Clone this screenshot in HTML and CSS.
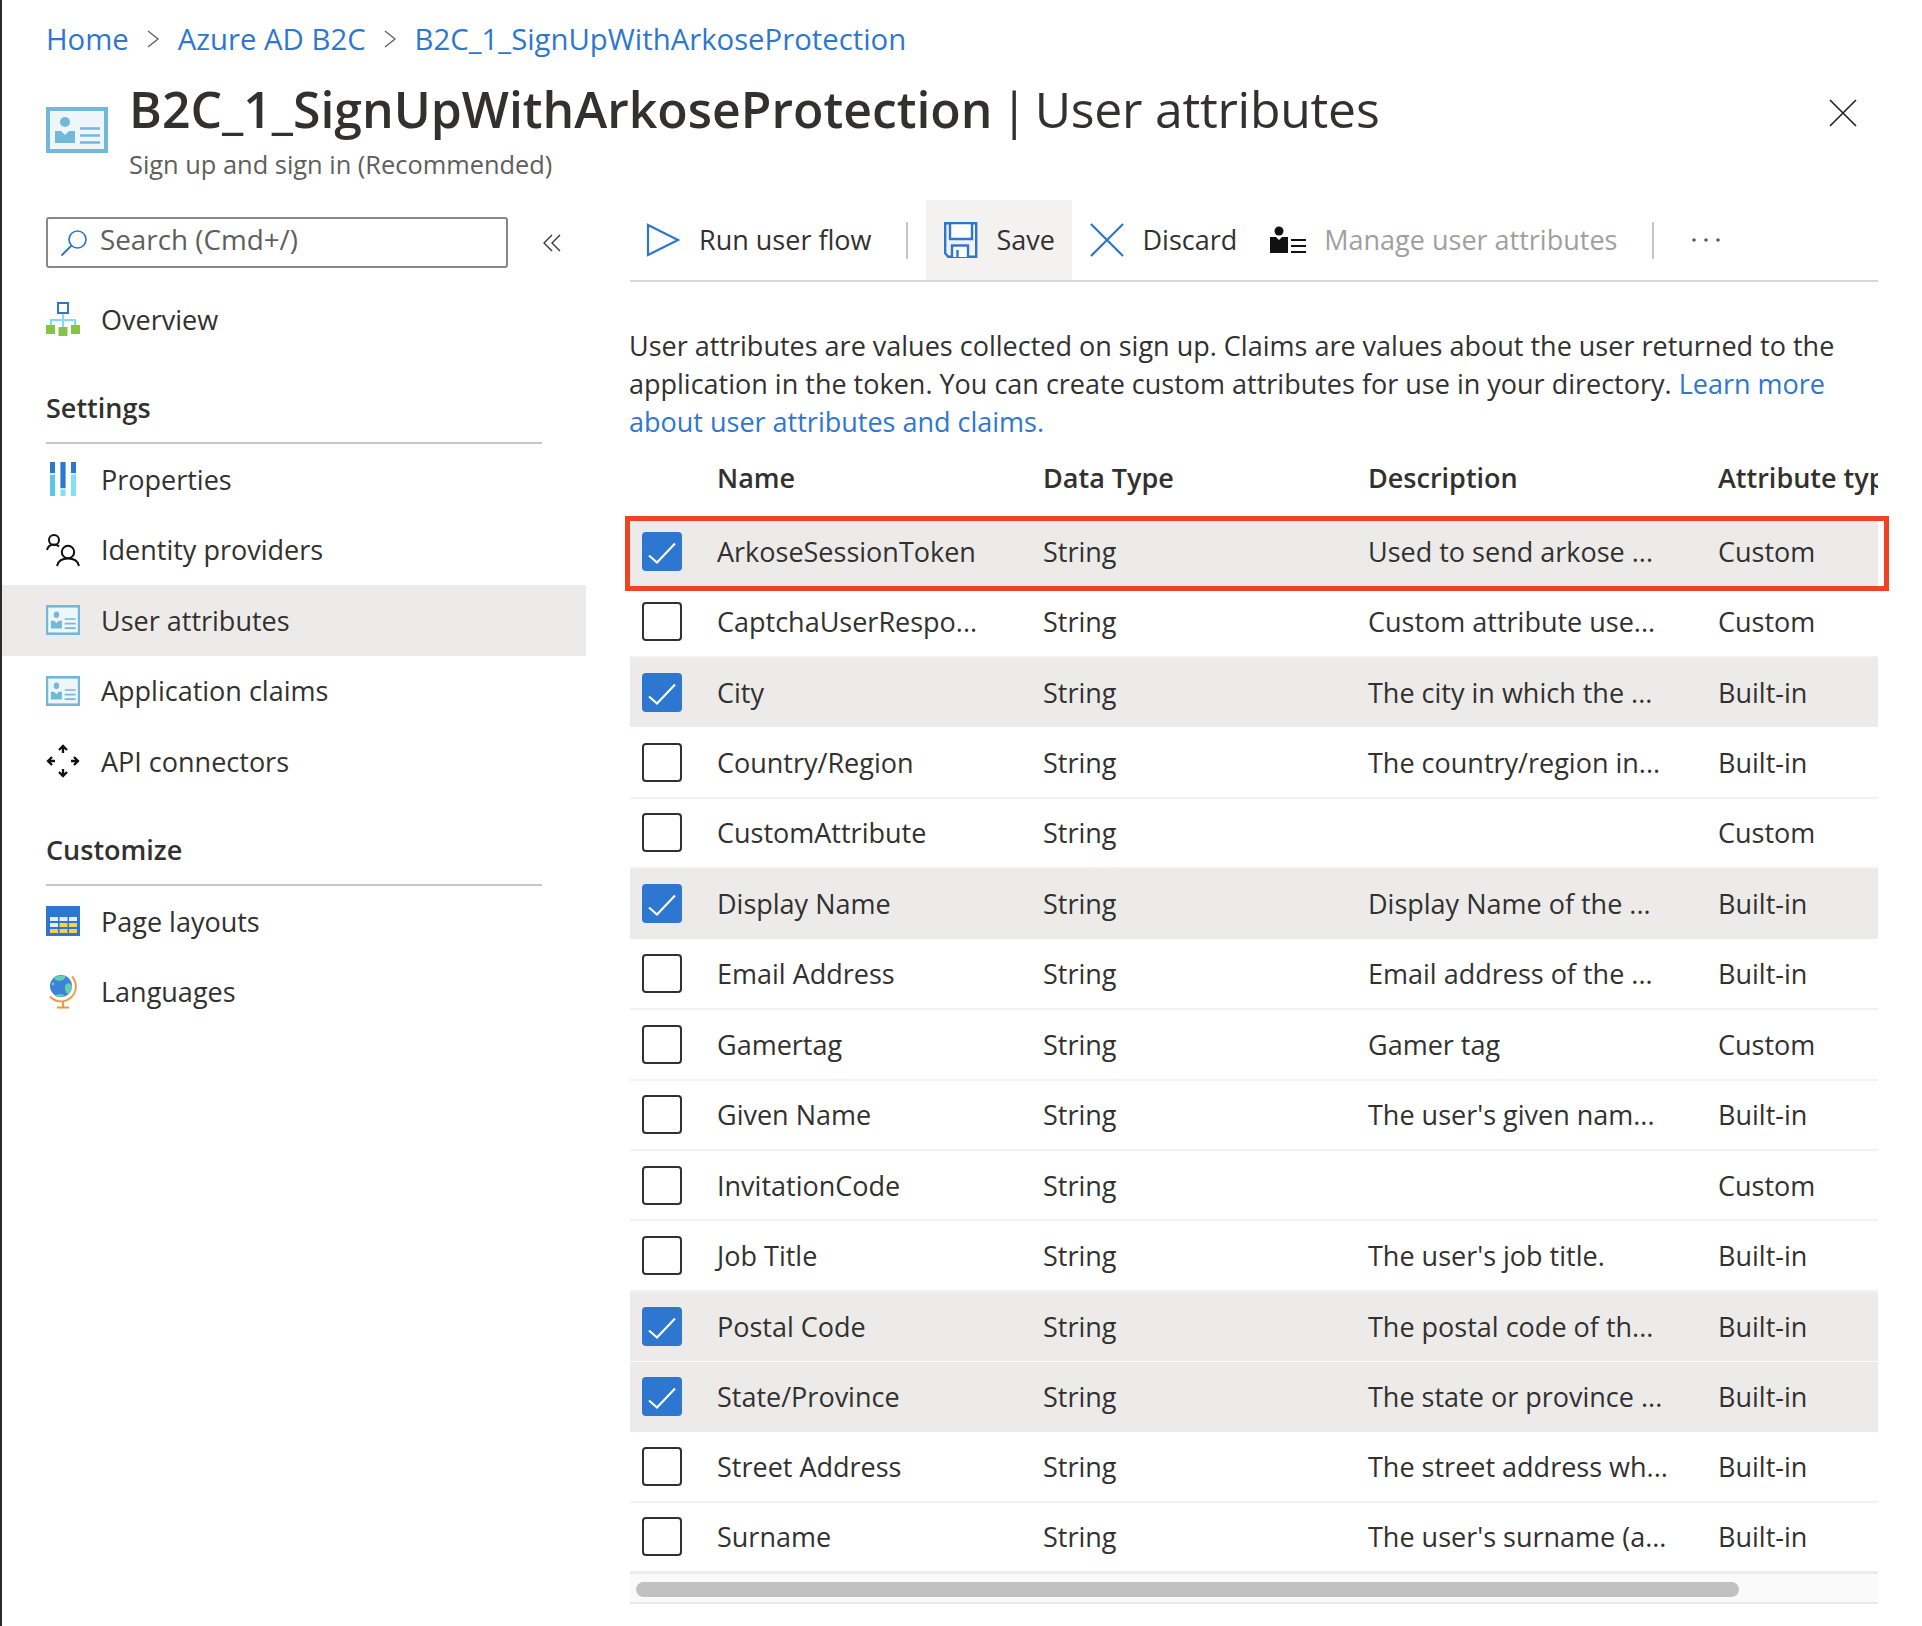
FILE: index.html
```html
<!DOCTYPE html>
<html>
	<head>
		<meta charset="utf-8">
		<title>User attributes</title>
		<link rel="stylesheet" href="styles.css">
	</head>
	<body>
		<svg class="defs" width="0" height="0">
			<symbol id="card" viewBox="0 0 62 46" preserveAspectRatio="none">
				<rect width="62" height="46" fill="#72b8d9"/>
				<rect x="4" y="4" width="54" height="38" fill="#eff6fa"/>
				<circle cx="19" cy="15" r="5" fill="#72b8d9"/>
				<path d="M9 24h6l4 4 4-4h6v12H9z" fill="#72b8d9"/>
				<path d="M34 21.500h20M34 28.500h20M34 35.500h20" stroke="#72b8d9" stroke-width="2.600"/>
			</symbol>
			<symbol id="check" viewBox="0 0 40 38">
				<path d="M7 23l8 7L33 11" fill="none" stroke="#fff" stroke-width="2.100"/>
			</symbol>
		</svg>

		<nav class="crumbs">
			<a href="#">Home</a>
			<svg class="crumb_sep" viewBox="0 0 14 18"><path d="M2 1l10 8-10 8" fill="none" stroke="#605e5c" stroke-width="1.300"/></svg>
			<a href="#">Azure AD B2C</a>
			<svg class="crumb_sep" viewBox="0 0 14 18"><path d="M2 1l10 8-10 8" fill="none" stroke="#605e5c" stroke-width="1.300"/></svg>
			<a href="#">B2C_1_SignUpWithArkoseProtection</a>
		</nav>

		<header class="head">
			<svg class="head_icon"><use href="#card"/></svg>
			<div class="head_text">
				<h1><b>B2C_1_SignUpWithArkoseProtection</b><span class="bar">|</span>User attributes</h1>
				<p>Sign up and sign in (Recommended)</p>
			</div>
			<svg class="close" viewBox="0 0 28 28"><path d="M1 1l26 26M27 1L1 27" stroke="#1f1f1f" stroke-width="1.600"/></svg>
		</header>

		<div class="content">
			<aside class="side">
				<div class="search_row">
					<div class="search">
						<svg class="search_icon" viewBox="0 0 28 28"><circle cx="17.500" cy="10.500" r="8.500" fill="none" stroke="#2e77d0" stroke-width="1.700"/><path d="M11.500 16.500L1.500 26.500" stroke="#2e77d0" stroke-width="2"/></svg>
						<span>Search (Cmd+/)</span>
					</div>
					<svg class="collapse" viewBox="0 0 18 18"><path d="M9 1L1 9l8 8M17 1L9 9l8 8" fill="none" stroke="#323130" stroke-width="1.300"/></svg>
				</div>

				<a class="item" href="#">
					<svg class="item_icon" viewBox="0 0 34 34">
						<path d="M17 10v8M5 24v-6h24v6M17 18v8" fill="none" stroke="#7fdcf5" stroke-width="2"/>
						<rect x="12" y="1" width="10" height="10" fill="#fff" stroke="#2e77d0" stroke-width="2"/>
						<rect x="0" y="23" width="9" height="9" fill="#86c449"/>
						<rect x="25" y="23" width="9" height="9" fill="#86c449"/>
						<rect x="12.500" y="25" width="9" height="9" fill="#86c449"/>
					</svg>
					<span>Overview</span>
				</a>

				<h2 class="group">Settings</h2>
				<a class="item" href="#">
					<svg class="item_icon" viewBox="0 0 34 34">
						<rect x="4" y="0" width="5" height="34" fill="#5cc6e6"/>
						<rect x="4" y="0" width="5" height="11" fill="#2e77d0"/>
						<rect x="4" y="11" width="5" height="2" fill="#cdeaf5"/>
						<rect x="14.500" y="0" width="5" height="34" fill="#7fe0f8"/>
						<rect x="14.500" y="0" width="5" height="26" fill="#2e77d0"/>
						<rect x="14.500" y="26" width="5" height="2" fill="#cdeaf5"/>
						<rect x="25" y="0" width="5" height="34" fill="#7fe0f8"/>
						<rect x="25" y="0" width="5" height="11" fill="#2e77d0"/>
						<rect x="25" y="11" width="5" height="2" fill="#cdeaf5"/>
					</svg>
					<span>Properties</span>
				</a>
				<a class="item" href="#">
					<svg class="item_icon" viewBox="0 0 34 34" fill="none" stroke="#111" stroke-width="2">
						<circle cx="8" cy="7" r="5"/>
						<path d="M1 17c1-4 3.500-5.500 7-5.500 2.500 0 4 .8 5 2"/>
						<circle cx="22" cy="19" r="6.200"/>
						<path d="M11 33c1-5 5-7.500 11-7.500s10 2.500 11 7.500"/>
					</svg>
					<span>Identity providers</span>
				</a>
				<a class="item selected" href="#">
					<svg class="item_icon card_small"><use href="#card"/></svg>
					<span>User attributes</span>
				</a>
				<a class="item" href="#">
					<svg class="item_icon card_small"><use href="#card"/></svg>
					<span>Application claims</span>
				</a>
				<a class="item" href="#">
					<svg class="item_icon" viewBox="0 0 34 34" fill="none" stroke="#111" stroke-width="2.300">
						<path d="M17 9V2M13 6l4-4 4 4M17 25v7M13 28l4 4 4-4M9 17H2M6 13l-4 4 4 4M25 17h7M28 13l4 4-4 4"/>
					</svg>
					<span>API connectors</span>
				</a>

				<h2 class="group">Customize</h2>
				<a class="item" href="#">
					<svg class="item_icon" viewBox="0 0 34 30">
						<rect x="0" y="0" width="34" height="30" fill="#2e77d0"/>
						<rect x="4" y="11" width="8" height="4" fill="#e4eef8"/><rect x="13.500" y="11" width="8" height="4" fill="#e4eef8"/><rect x="23" y="11" width="8" height="4" fill="#e4eef8"/>
						<rect x="4" y="17" width="8" height="4" fill="#e4eef8"/><rect x="13.500" y="17" width="8" height="4" fill="#f6d24a"/><rect x="23" y="17" width="8" height="4" fill="#f6d24a"/>
						<rect x="4" y="23" width="8" height="4" fill="#f6d24a"/><rect x="13.500" y="23" width="8" height="4" fill="#f6d24a"/><rect x="23" y="23" width="8" height="4" fill="#f6d24a"/>
					</svg>
					<span>Page layouts</span>
				</a>
				<a class="item" href="#">
					<svg class="item_icon" viewBox="0 0 34 34">
						<circle cx="15" cy="11" r="11" fill="#3f80d8"/>
						<path d="M8 3c3-2.500 9-3 11-2 1 2-1 4-4 4.500S9 5.500 8 3zM20 9c3-1.500 6-.5 6 3 0 3-2 6-4 7-2-1-3-3-3-5s0-4 1-5zM9 21c1-2 7-2.500 10-1-3 2-7 2.500-10 1z" fill="#5fd0b0"/>
						<circle cx="7" cy="9" r="1.400" fill="#5fd0b0"/>
						<path d="M26 1.500A14.500 14.500 0 0 1 4 21.500" fill="none" stroke="#ee9a3c" stroke-width="1.900"/>
						<path d="M17 26v6M11 32.500h12" stroke="#ee9a3c" stroke-width="2"/>
					</svg>
					<span>Languages</span>
				</a>
			</aside>

			<main class="main">
				<div class="toolbar">
					<a class="tool" href="#">
						<svg class="tool_icon run" viewBox="0 0 34 34"><path d="M2 2l30 15L2 32z" fill="none" stroke="#2e77d0" stroke-width="2.200"/></svg>
						<span>Run user flow</span>
					</a>
					<i class="tool_sep first"></i>
					<a class="tool save" href="#">
						<svg class="tool_icon" viewBox="0 0 34 36" fill="none" stroke="#2e77d0" stroke-width="2.400">
							<path d="M1.200 1.200h31v33.500h-28l-3-3.500z" fill="#f0f4f9"/>
							<path d="M6 1v16h22V1z" fill="#fff"/>
							<path d="M8 35V23.500h16V35M13.500 35v-7" fill="#fff"/>
						</svg>
						<span>Save</span>
					</a>
					<a class="tool discard" href="#">
						<svg class="tool_icon" viewBox="0 0 36 36"><path d="M1 1l34 34M35 1L1 35" stroke="#2e77d0" stroke-width="2.300"/></svg>
						<span>Discard</span>
					</a>
					<a class="tool disabled" href="#">
						<svg class="manage_icon" viewBox="0 0 36 28">
							<circle cx="9" cy="5" r="4.500" fill="#111"/>
							<path d="M0 11h6l3 3 3-3h6v16H0z" fill="#111"/>
							<path d="M21 14h15M21 20h15M21 26h15" stroke="#111" stroke-width="2"/>
						</svg>
						<span>Manage user attributes</span>
					</a>
					<i class="tool_sep"></i>
					<svg class="more" viewBox="0 0 30 6"><circle cx="3" cy="3" r="1.800" fill="#605e5c"/><circle cx="15" cy="3" r="1.800" fill="#605e5c"/><circle cx="27" cy="3" r="1.800" fill="#605e5c"/></svg>
				</div>

				<p class="intro">User attributes are values collected on sign up. Claims are values about the user returned to the<br>application in the token. You can create custom attributes for use in your directory. <a href="#">Learn more<br>about user attributes and claims.</a></p>

				<div class="table">
					<div class="row head_row"><span></span><span>Name</span><span>Data Type</span><span>Description</span><span>Attribute type</span></div>
					<div class="row on"><span class="box"><svg><use href="#check"/></svg></span><span>ArkoseSessionToken</span><span>String</span><span>Used to send arkose ...</span><span>Custom</span></div>
					<div class="row"><span class="box"></span><span>CaptchaUserRespo...</span><span>String</span><span>Custom attribute use...</span><span>Custom</span></div>
					<div class="row on"><span class="box"><svg><use href="#check"/></svg></span><span>City</span><span>String</span><span>The city in which the ...</span><span>Built-in</span></div>
					<div class="row"><span class="box"></span><span>Country/Region</span><span>String</span><span>The country/region in...</span><span>Built-in</span></div>
					<div class="row"><span class="box"></span><span>CustomAttribute</span><span>String</span><span></span><span>Custom</span></div>
					<div class="row on"><span class="box"><svg><use href="#check"/></svg></span><span>Display Name</span><span>String</span><span>Display Name of the ...</span><span>Built-in</span></div>
					<div class="row"><span class="box"></span><span>Email Address</span><span>String</span><span>Email address of the ...</span><span>Built-in</span></div>
					<div class="row"><span class="box"></span><span>Gamertag</span><span>String</span><span>Gamer tag</span><span>Custom</span></div>
					<div class="row"><span class="box"></span><span>Given Name</span><span>String</span><span>The user's given nam...</span><span>Built-in</span></div>
					<div class="row"><span class="box"></span><span>InvitationCode</span><span>String</span><span></span><span>Custom</span></div>
					<div class="row"><span class="box"></span><span>Job Title</span><span>String</span><span>The user's job title.</span><span>Built-in</span></div>
					<div class="row on"><span class="box"><svg><use href="#check"/></svg></span><span>Postal Code</span><span>String</span><span>The postal code of th...</span><span>Built-in</span></div>
					<div class="row on"><span class="box"><svg><use href="#check"/></svg></span><span>State/Province</span><span>String</span><span>The state or province ...</span><span>Built-in</span></div>
					<div class="row"><span class="box"></span><span>Street Address</span><span>String</span><span>The street address wh...</span><span>Built-in</span></div>
					<div class="row last"><span class="box"></span><span>Surname</span><span>String</span><span>The user's surname (a...</span><span>Built-in</span></div>
					<div class="scrollbar"><div class="thumb"></div></div>
					<div class="highlight"></div>
				</div>
			</main>
		</div>
	</body>
</html>
```

FILE: styles.css
```css
*{
	margin: 0;
	padding: 0;
	box-sizing: border-box;
}
html,body{
	height: 100%;
	overflow: hidden;
}
body{
	background: #fff;
	border-left: 2px solid #2b2b2b;
	font-family: "Open Sans", "Noto Sans", sans-serif;
	font-size: 27px;
	color: #323130;
}
a{
	color: inherit;
	text-decoration: none;
}
.defs{
	display: block;
	height: 0;
}

.crumbs{
	height: 78px;
	padding-left: 44px;
	display: flex;
	align-items: center;
	font-size: 29.3px;
	color: #2e77d0;
}
.crumb_sep{
	width: 14px;
	height: 18px;
	margin: 0 18px 0 17px;
}

.head{
	height: 122px;
	padding: 0 65px 0 44px;
	display: flex;
	position: relative;
}
.head_icon{
	width: 62px;
	height: 46px;
	margin: 29px 21px 0 0;
	flex: none;
}
.head_text{
	flex: 1;
}
.head h1{
	font-size: 49.9px;
	font-weight: 400;
	line-height: 64px;
	margin-top: -1px;
	letter-spacing: -0.25px;
	white-space: nowrap;
}
.head h1 b{
	font-weight: 600;
	letter-spacing: 0;
}
.bar{
	margin: 0 7px 0 8px;
}
.head p{
	font-size: 25.4px;
	line-height: 38px;
	margin-top: 4px;
	color: #605e5c;
}
.close{
	width: 28px;
	height: 28px;
	margin-top: 21px;
	flex: none;
}

.content{
	display: flex;
}
.side{
	width: 584px;
	flex: none;
}
.search_row{
	padding: 17px 0 0 44px;
	height: 84px;
	display: flex;
}
.search{
	width: 462px;
	height: 51px;
	border: 2px solid #8a8886;
	border-radius: 3px;
	padding-left: 12px;
	display: flex;
	align-items: center;
	color: #605e5c;
}
.search_icon{
	width: 28px;
	height: 28px;
	margin-right: 12px;
}
.search span{
	font-size: 27.8px;
	padding-bottom: 8px;
}
.collapse{
	width: 18px;
	height: 18px;
	margin: 17px 0 0 35px;
}
.item{
	height: 70.5px;
	padding-left: 44px;
	display: flex;
	align-items: center;
}
.item.selected{
	background: #edebe9;
}
.item_icon{
	width: 34px;
	height: 34px;
	margin-right: 21px;
	flex: none;
}
.card_small{
	height: 30px;
}
.group{
	margin-left: 44px;
	width: 496px;
	padding: 35.5px 0 16px;
	font-size: 27px;
	line-height: 36px;
	font-weight: 600;
	border-bottom: 2px solid #c8c6c4;
}

.main{
	width: 1248px;
	margin-left: 44px;
	flex: none;
}
.toolbar{
	height: 82px;
	border-bottom: 2px solid #d8d8d8;
	display: flex;
	align-items: center;
}
.tool{
	height: 80px;
	display: flex;
	align-items: center;
}
.tool span{
	padding-bottom: 2px;
}
.tool_icon{
	width: 34px;
	height: 36px;
	flex: none;
	margin-right: 19px;
}
.run{
	margin-left: 16px;
}
.tool_sep{
	width: 2px;
	height: 37px;
	background: #c8c6c4;
}
.tool_sep.first{
	margin: 0 18px 0 34px;
}
.save{
	width: 146px;
	padding-left: 18px;
	background: #f3f2f1;
}
.discard{
	margin-left: 18px;
}
.disabled{
	margin-left: 33px;
	color: #a19f9d;
}
.manage_icon{
	width: 36px;
	height: 28px;
	margin-right: 18px;
	flex: none;
}
.disabled + .tool_sep{
	margin-left: 35px;
}
.more{
	width: 30px;
	height: 6px;
	margin-left: 37px;
}

.intro{
	padding-top: 45px;
	line-height: 38px;
	margin-left: -1px;
	white-space: nowrap;
}
.intro a{
	color: #2e77d0;
}

.table{
	position: relative;
}
.row{
	height: 70.45px;
	padding-left: 12px;
	display: grid;
	grid-template-columns: 75px 326px 325px 350px 1fr;
	align-items: center;
	border-bottom: 2px solid #f3f2f1;
	white-space: nowrap;
	overflow: hidden;
}
.row.on{
	background: #ecebe9;
	border-bottom: 1px solid #fff;
}
.row.last{
	border-bottom: 3px solid #ebebeb;
}
.head_row{
	height: 76px;
	padding-bottom: 4px;
	font-weight: 600;
	border-bottom: none;
}
.box{
	width: 40px;
	height: 39px;
	border: 2px solid #323130;
	border-radius: 4px;
	background: #fff;
}
.on .box{
	border: none;
	background: #2e77d0;
}
.box svg{
	display: block;
	width: 40px;
	height: 39px;
}
.head_row span:first-child{
	height: 1px;
}
.scrollbar{
	height: 30px;
	border-bottom: 2px solid #e8e8e8;
	background: #fafafa;
	padding: 8px 6px;
}
.thumb{
	width: 1103px;
	height: 15px;
	border-radius: 8px;
	background: #c1c1c1;
}
.highlight{
	position: absolute;
	top: 75px;
	left: -5px;
	width: 1264px;
	height: 75px;
	border: 5px solid #ee4327;
}
```
